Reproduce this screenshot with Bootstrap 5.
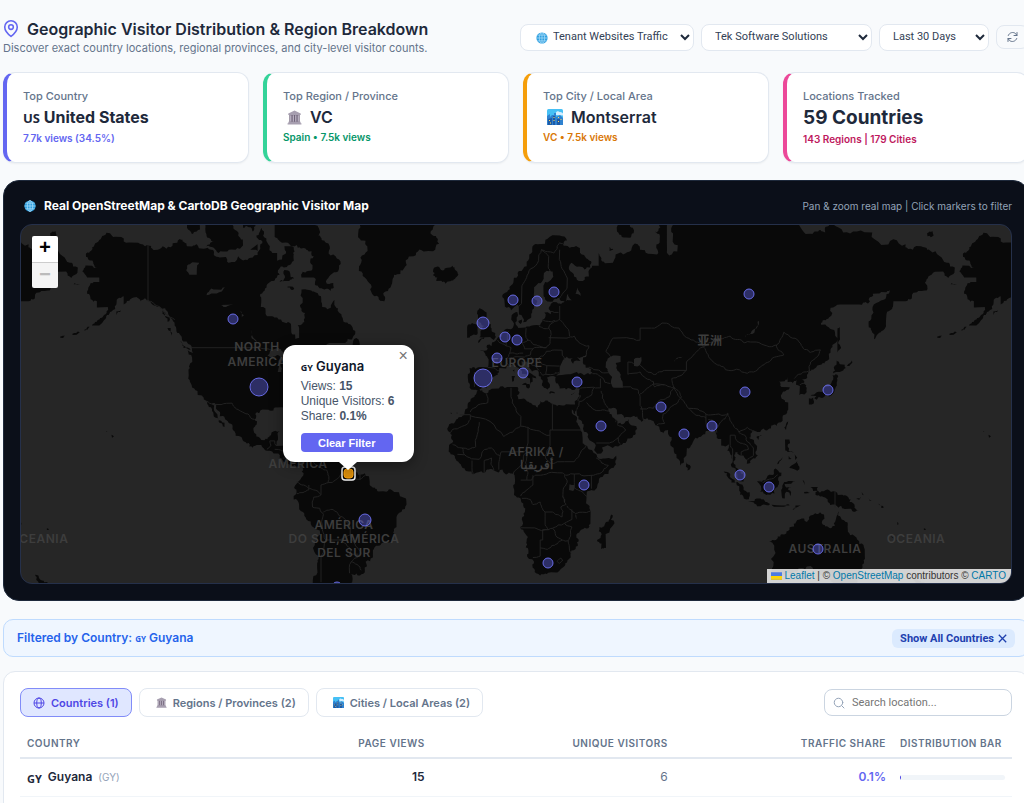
<!DOCTYPE html>
<html lang="en">
<head>
<meta charset="utf-8">
<meta name="viewport" content="width=device-width, initial-scale=1">
<title>Geographic Visitor Distribution</title>
<link href="https://cdn.jsdelivr.net/npm/bootstrap@5.3.0/dist/css/bootstrap.min.css" rel="stylesheet">
<style>
  body { background: #f8fafc; color: #1e293b; font-family: Inter, "Liberation Sans", sans-serif; font-size: 12px; line-height: 16px; overflow-x: hidden; }
  .dashboard { margin: 18px -5px 0 3px; }
  .page-title { font-size: 16px; line-height: 22px; font-weight: 600; }
  .page-sub { font-size: 11px; color: #64748b; }
  .filter-select { appearance: none; height: 27px; border: 1px solid #e2e8f0; border-radius: 8px; padding: 0 16px 0 13px; font: 11px/16px Roboto, sans-serif; color: #334155;
    background: #fff url("data:image/svg+xml,%3Csvg xmlns='http://www.w3.org/2000/svg' width='10' height='8' fill='none' stroke='%231e293b' stroke-width='2'%3E%3Cpath d='M1 2l4 4 4-4'/%3E%3C/svg%3E") no-repeat right 3px center; }
  .source-select { padding-left: 32px; width: 174px; }
  .tenant-select { width: 171px; }
  .range-select { width: 110px; }
  .source-icon { left: 16px; top: 8px; pointer-events: none; }
  .refresh-btn { height: 24px; width: 33px; border: 1px solid #e2e8f0; border-radius: 8px; background: #f8fafc; color: #64748b; padding: 0 9px; }
  .stat-grid { display: grid; grid-template-columns: repeat(4, minmax(0, 1fr)); gap: 14px; }
  .stat { background: #fff; border: 1px solid #e2e8f0; border-left: 4px solid var(--accent); border-radius: 12px; min-height: 91px; padding: 15px 16px 16px; box-shadow: 0 1px 2px #0000000d; }
  .stat-label { font-size: 11px; font-weight: 500; color: #64748b; }
  .stat-value { font-size: 16px; line-height: 26px; font-weight: 600; }
  .stat-name { font-weight: 700; }
  .stat-total { font-size: 19px; line-height: 28px; font-weight: 700; }
  .stat-note { font-size: 10px; line-height: 14px; font-weight: 600; color: var(--note); }
  .flag { font-family: "Noto Sans", sans-serif; font-weight: 700; }
  .flag-lg { font-size: 13px; }
  .map-card { background: #0b0f19; border: 1px solid #1e293b; border-radius: 16px; padding: 16px; color: #fff; }
  .map-head { height: 27px; padding-bottom: 9px; }
  .map-title { font-size: 12px; line-height: 18px; font-weight: 700; }
  .map-hint { font-size: 10px; color: #94a3b8; }
  .world { position: relative; height: 360px; border: 1px solid #25304a; border-radius: 12px; overflow: hidden; background: #262626; }
  .world svg.geo { width: 100%; height: 100%; display: block; }
  .land { fill: #090909; }
  .lake { fill: #262626; }
  .frontier { fill: none; stroke: #222; stroke-width: 1; }
  .geo text { font-family: Inter, "Noto Sans CJK SC", sans-serif; font-weight: 600; fill: #3d3d3d; font-size: 12px; text-anchor: middle; letter-spacing: .5px; }
  .pin { fill: #6366f1; fill-opacity: .4; stroke: #6f72f5; stroke-opacity: .9; stroke-width: 1; }
  .zoom-ctl { left: 11px; top: 11px; width: 26px; border-radius: 2px; overflow: hidden; }
  .zoom-ctl button { display: block; width: 26px; height: 26px; border: 0; padding: 0; background: #fff; color: #000; font: bold 20px/24px "Liberation Mono", monospace; }
  .zoom-ctl button + button { border-top: 1px solid #ccc; background: #f4f4f4; color: #bbb; }
  .popup { left: 33%; top: 120px; width: 131px; margin-left: -65px; padding: 12px 18px; height: 117px; background: #fff; border-radius: 12px; color: #475569; font: 12px/15px "Liberation Sans", sans-serif; box-shadow: 0 3px 14px #0006; }
  .popup::after { content: ""; position: absolute; left: 56px; top: 117px; border: 9px solid transparent; border-top: 8px solid #fff; border-bottom: 0; }
  .popup-name { font: 600 13px/18px Inter, sans-serif; color: #0f172a; margin-bottom: 2px; }
  .flag-sm { font-size: 9px; }
  .popup-close { right: 4px; top: 2px; border: 0; background: none; padding: 0; color: #757575; font: 16px/18px "Liberation Sans", sans-serif; width: 13px; }
  .clear-btn { display: block; width: 92px; height: 19px; margin-top: 9px; border: 0; border-radius: 4px; background: #6366f1; color: #fff; padding: 0; font: bold 11px/18px "Liberation Sans", sans-serif; }
  .credit { right: 0; bottom: 0; padding: 0 5px 0 4px; height: 14px; background: #ffffffcc; color: #333; font: 10px/14px "Liberation Sans", sans-serif; }
  .credit a { color: #0078a8; text-decoration: none; }
  .filter-bar { min-height: 38px; background: #eff6ff; border: 1px solid #bfdbfe; border-radius: 10px; padding: 0 13px; color: #2563eb; font-weight: 600; }
  .filter-bar .flag { font-size: 8px; }
  .show-all { height: 19px; border: 0; border-radius: 6px; background: #dbeafe; color: #1e40af; padding: 0 8px; font: bold 11px/19px Roboto, sans-serif; }
  .table-card { background: #fff; border: 1px solid #e2e8f0; border-radius: 12px; padding: 16px 16px 40px; }
  .tab-btn { height: 29px; border: 1px solid #e2e8f0; border-radius: 8px; background: #fff; color: #64748b; padding: 0 12px; font: 600 11px/16px Inter, sans-serif; gap: 6px; }
  .tab-btn.current { background: #e0e7ff; border-color: #818cf8; color: #4f46e5; }
  .search-box { width: 188px; height: 27px; border: 1px solid #cbd5e1; border-radius: 8px; padding: 0 10px 0 27px; font: 11px/16px Roboto, sans-serif; color: #334155; background: transparent; }
  .search-box::placeholder { color: #757575; }
  .search-icon { left: 9px; top: 8px; color: #94a3b8; }
  .geo-table { width: 100%; table-layout: fixed; margin-top: 11px; }
  .geo-table th { height: 30px; padding: 0 7px; border-bottom: 2px solid #e2e8f0; font-size: 10px; font-weight: 600; letter-spacing: .5px; color: #64748b; white-space: nowrap; }
  .geo-table td { height: 38px; padding: 0 7px; border-bottom: 1px solid #f1f5f9; }
  .geo-table .c1 { width: 23%; } .geo-table .c2 { width: 18.5%; } .geo-table .c3 { width: 24.5%; } .geo-table .c4 { width: 22%; } .geo-table .c5 { width: 12%; }
  .country-cell { gap: 6px; }
  .country-cell .flag { font-size: 11px; }
  .iso { font-size: 10px; color: #94a3b8; }
  .share { color: #6366f1; font-weight: 600; }
  .meter { height: 5px; border-radius: 3px; background: #f1f5f9; overflow: hidden; }
  .meter > div { height: 5px; background: #4f46e5; }
</style>
</head>
<body>
<svg width="0" height="0" class="position-absolute" aria-hidden="true">
  <symbol id="i-globe" viewBox="0 0 16 16"><circle cx="8" cy="8" r="7.5" fill="#2f9fe0"/><g fill="none" stroke="#b5e3fb" stroke-width=".9"><ellipse cx="8" cy="8" rx="3.6" ry="7.3"/><path d="M8 .5v15M.5 8h15M1.8 4.2h12.4M1.8 11.8h12.4"/></g></symbol>
  <symbol id="i-hall" viewBox="0 0 16 16"><path d="M8 .6l6.6 3.2v1.5H1.4V3.800z" fill="#a79fb0"/><path d="M2.500 5.300h11v7.500h-11z" fill="#6d6076"/><path d="M3 5.500h1.800v7H3zM6 5.500h1.500v7H6zM8.600 5.500h1.500v7H8.600zM11.300 5.500H13v7h-1.700z" fill="#b6aebf"/><path d="M1.500 12.500h13V14h-13zM.6 14h14.800v1.500H.6z" fill="#a79fb0"/></symbol>
  <symbol id="i-city" viewBox="0 0 16 16"><rect width="16" height="16" rx="1.500" fill="#46c0f5"/><path d="M9 3.500c1-2 3-1.500 3.500-.5 2-.3 3 .8 3.500 1.500v2L9 6z" fill="#d5efff"/><path d="M0 7l3-2v3l2-2h2V4h2v4l2-1 2-1 3 3v7H0z" fill="#2f82d0"/><path d="M1 10l4-1v7H1zM6 7h2v9H6zM10 10h3v6h-3z" fill="#1d5aa5"/><path d="M2 11h1v1H2zM6.500 8h1v1h-1zM6.500 11h1v1h-1zM11 8h1v1h-1zM13.500 10h1v1h-1zM11 12h1v1h-1zM3 13.500h1v1H3z" fill="#ffd75e"/></symbol>
</svg>

<main class="dashboard">
  <header class="d-flex justify-content-between align-items-center">
    <div>
      <h1 class="page-title d-flex align-items-center mb-0 gap-2">
        <svg width="16" height="18" viewBox="2 1 20 23" fill="none" stroke="#6366f1" stroke-width="2" stroke-linecap="round" stroke-linejoin="round"><path d="M20 10c0 6-8 12-8 12s-8-6-8-12a8 8 0 0 1 16 0Z"/><circle cx="12" cy="10" r="3"/></svg>
        Geographic Visitor Distribution &amp; Region Breakdown
      </h1>
      <div class="page-sub">Discover exact country locations, regional provinces, and city-level visitor counts.</div>
    </div>
    <div class="d-flex align-items-center flex-shrink-0" style="gap:7px">
      <div class="position-relative">
        <select class="filter-select source-select" aria-label="Traffic source"><option>Tenant Websites Traffic</option></select>
        <svg class="source-icon position-absolute" width="12" height="12"><use href="#i-globe"/></svg>
      </div>
      <select class="filter-select tenant-select" aria-label="Tenant"><option>Tek Software Solutions</option></select>
      <select class="filter-select range-select" aria-label="Date range"><option>Last 30 Days</option></select>
      <button class="refresh-btn d-flex align-items-center" aria-label="Refresh"><svg width="14" height="12" viewBox="0 0 24 24" fill="none" stroke="currentColor" stroke-width="2" stroke-linecap="round" stroke-linejoin="round"><path d="M21 3v6h-6M3 21v-6h6M3.500 9a9 9 0 0 1 15-3.400L21 9M3 15l2.500 3.400A9 9 0 0 0 20.500 15"/></svg></button>
    </div>
  </header>

  <section class="stat-grid mt-3">
    <div class="stat" style="--accent:#6366f1;--note:#6366f1">
      <div class="stat-label">Top Country</div>
      <div class="stat-value stat-name"><span class="flag flag-lg">US</span> United States</div>
      <div class="stat-note">7.7k views (34.5%)</div>
    </div>
    <div class="stat" style="--accent:#34d399;--note:#059669">
      <div class="stat-label">Top Region / Province</div>
      <div class="stat-value d-flex align-items-center gap-2"><svg class="ms-1" width="15" height="15"><use href="#i-hall"/></svg>VC</div>
      <div class="stat-note">Spain • 7.5k views</div>
    </div>
    <div class="stat" style="--accent:#f59e0b;--note:#d97706">
      <div class="stat-label">Top City / Local Area</div>
      <div class="stat-value d-flex align-items-center gap-2"><svg class="ms-1" width="16" height="16"><use href="#i-city"/></svg>Montserrat</div>
      <div class="stat-note">VC • 7.5k views</div>
    </div>
    <div class="stat" style="--accent:#ec4899;--note:#be185d">
      <div class="stat-label">Locations Tracked</div>
      <div class="stat-value stat-total">59 Countries</div>
      <div class="stat-note">143 Regions | 179 Cities</div>
    </div>
  </section>

  <section class="map-card" style="margin-top:17px">
    <div class="map-head d-flex justify-content-between align-items-center">
      <h2 class="map-title d-flex align-items-center mb-0 gap-2"><svg class="ms-1" width="12" height="12"><use href="#i-globe"/></svg>Real OpenStreetMap &amp; CartoDB Geographic Visitor Map</h2>
      <div class="map-hint">Pan &amp; zoom real map | Click markers to filter</div>
    </div>
    <div class="world">
      <svg class="geo" viewBox="0 0 990 358" preserveAspectRatio="xMidYMid slice" role="img" aria-label="World map of visitors">
        <g id="atlas"></g>
        <g>
          <text x="236" y="126">NORTH</text><text x="236" y="141">AMERICA</text>
          <text x="277" y="243">AMÉRICA</text>
          <text x="323" y="304">AMÉRICA</text><text x="323" y="318">DO SUL;AMÉRICA</text><text x="323" y="332">DEL SUR</text>
          <text x="496" y="142">EUROPE</text><text x="515" y="231">AFRIKA /</text><text x="515" y="244">أفريقيا</text>
          <text x="689" y="120">亚洲</text><text x="804" y="328">AUSTRALIA</text>
          <text x="895" y="318">OCEANIA</text><text x="18" y="318">OCEANIA</text>
        </g>
        <g id="pins"></g>
        <rect x="321" y="242" width="13" height="13" rx="3" fill="#090909" stroke="#eee" stroke-width="1.500"/>
        <rect x="323" y="244" width="9" height="9" rx="3" fill="#d48a0c" stroke="#f59e0b"/>
      </svg>
      <div class="zoom-ctl position-absolute"><button aria-label="Zoom in">+</button><button aria-label="Zoom out">−</button></div>
      <div class="popup position-absolute">
        <button class="popup-close position-absolute" aria-label="Close">×</button>
        <div class="popup-name"><span class="flag flag-sm">GY</span> Guyana</div>
        <div>Views: <b>15</b></div>
        <div class="text-nowrap">Unique Visitors: <b>6</b></div>
        <div>Share: <b>0.1%</b></div>
        <button class="clear-btn">Clear Filter</button>
      </div>
      <div class="credit position-absolute"><svg width="11" height="8" viewBox="0 0 12 8"><path fill="#4c7be1" d="M0 0h12v4H0z"/><path fill="#ffd500" d="M0 4h12v3H0z"/><path fill="#e0bc00" d="M0 7h12v1H0z"/></svg> <a href="#">Leaflet</a> | © <a href="#">OpenStreetMap</a> contributors © <a href="#">CARTO</a></div>
    </div>
  </section>

  <section class="filter-bar d-flex justify-content-between align-items-center" style="margin-top:18px">
    <div>Filtered by Country: <span class="flag">GY</span> Guyana</div>
    <button class="show-all d-flex align-items-center gap-1">Show All Countries <svg width="9" height="9" viewBox="0 0 9 9" stroke="currentColor" stroke-width="1.300"><path d="M.8.8l7.400 7.400M8.200.8L.8 8.200"/></svg></button>
  </section>

  <section class="table-card" style="margin-top:14px">
    <div class="d-flex justify-content-between align-items-center">
      <div class="d-flex" style="gap:7px">
        <button class="tab-btn current d-flex align-items-center"><svg width="12" height="12" viewBox="0 0 24 24" fill="none" stroke="currentColor" stroke-width="2"><circle cx="12" cy="12" r="10"/><ellipse cx="12" cy="12" rx="4.500" ry="10"/><path d="M2 12h20"/></svg>Countries (1)</button>
        <button class="tab-btn d-flex align-items-center"><svg class="ms-1" width="11" height="11"><use href="#i-hall"/></svg>Regions / Provinces (2)</button>
        <button class="tab-btn d-flex align-items-center"><svg class="ms-1" width="11" height="11"><use href="#i-city"/></svg>Cities / Local Areas (2)</button>
      </div>
      <div class="position-relative">
        <svg class="search-icon position-absolute" width="12" height="12" viewBox="0 0 24 24" fill="none" stroke="currentColor" stroke-width="2" stroke-linecap="round"><circle cx="11" cy="11" r="8.500"/><path d="M22 22l-4.500-4.500"/></svg>
        <input class="search-box" type="text" placeholder="Search location..." aria-label="Search location">
      </div>
    </div>
    <table class="geo-table">
      <thead><tr><th class="c1">COUNTRY</th><th class="c2 text-end">PAGE VIEWS</th><th class="c3 text-end">UNIQUE VISITORS</th><th class="c4 text-end">TRAFFIC SHARE</th><th class="c5">DISTRIBUTION BAR</th></tr></thead>
      <tbody><tr>
        <td><div class="d-flex align-items-center country-cell"><span class="flag pt-1">GY</span><span class="fw-semibold">Guyana</span><span class="iso">(GY)</span></div></td>
        <td class="text-end fw-semibold">15</td><td class="text-end" style="color:#64748b">6</td><td class="text-end share">0.1%</td>
        <td><div class="meter"><div style="width:1%"></div></div></td>
      </tr></tbody>
    </table>
  </section>
</main>

<script>
  // Coastlines as "lon,lat" pairs, one ring per entry.
  const land = [
  "-168,65.6 -164,66.5 -162,66.2 -163.5,67.1 -166.5,68.4 -163,69.7 -161,70.4 -156.6,71.3 -152,70.8 -145,70 -141,69.6 -137,69 -135,69.5 -129,70 -128,70.5 -125,69.5 -121,69.8 -115,69 -114,68.2 -109,67.9 -108,67 -104,68 -98,67.8 -96,68.2 -95,69.5 -96.5,71 -94.5,72 -92,70 -91,69.5 -90,68.5 -88,68.5 -88,67.3 -86,67.5 -85,69.5 -82,69.5 -81.5,68.5 -82,67 -84,66.3 -86.5,66.4 -87,65 -89,64 -93,62.5 -94.5,60 -94.7,58.8 -92.8,58.5 -92.5,57 -88,56.5 -85,55.3 -82.3,55 -82.2,53 -80.5,51.3 -79,51.5 -79,54 -79.5,54.7 -77,56 -76.5,57.5 -78.5,58.8 -77.5,60 -78,62.3 -75,62.2 -73,61.9 -70,61 -69.6,59.5 -69.5,58.8 -67.5,58.3 -65.5,59.5 -64.5,60.3 -63,58.5 -61.5,56.7 -60,55.3 -57.5,54.6 -56,52.5 -57,51.5 -60,50.2 -66.5,50.2 -69,48.7 -65,49.2 -64.5,48 -65,47 -64,46 -61,45.5 -63.5,44.6 -66,43.6 -67,44.8 -70,43.8 -70.7,42.5 -70,41.7 -74,40.7 -75,38.5 -76,37 -75.6,35.3 -78,33.9 -81,32 -81.4,30.5 -80.1,26.5 -80.6,25.2 -81.8,26.2 -82.7,28 -84,30 -86,30.4 -89,30.3 -89.5,29.2 -91.5,29.5 -94,29.6 -97,28 -97.3,26 -97.8,22.5 -96.5,19.5 -94.5,18.2 -92,18.6 -90.5,20 -90.3,21 -87,21.5 -87.7,19.5 -88.2,17.5 -88.5,15.8 -86,15.9 -83.3,15 -83.5,12 -83.7,11 -82.3,9.2 -79.5,9.5 -77.3,8.6 -77.6,7.3 -78.5,8.5 -80,7.5 -81.7,7.8 -83.5,8.6 -85.7,10 -87.5,12.8 -91,13.9 -94.5,16.2 -97,15.9 -101,17.4 -105,19.8 -105.5,21.5 -108,24.8 -109.5,26.5 -112,29 -113,31.2 -114.7,31.8 -114,30 -112.5,27.8 -111,25.5 -109.6,23.2 -110.3,23.4 -112,25 -114,27 -114.2,28.5 -116,30.5 -117.2,32.7 -118.5,34 -120.6,34.6 -122,36.8 -123.8,39 -124.3,41 -124,44 -124.7,48.3 -122.5,47.5 -123,49 -127,51 -128,52.5 -130,54.5 -131,56 -134,58.5 -137,58.8 -140,59.8 -144,60 -148,60.5 -151,59.3 -151,61 -154,59.3 -156,57.8 -159,55.9 -164,54.6 -162,55.5 -158,57.5 -157.5,58.8 -162,58.7 -162,60 -166,61.5 -165,63 -161,63.7 -161,64.5 -166,64.5",
  "-117,69.5 -112,68.5 -105,69 -102,69.6 -104,71 -107,72.9 -112,73 -118,72.5 -117,71 -112,70.4", "-125,72 -123,71.2 -121,71.5 -118.5,73 -125,74", "-102,72 -98,71.5 -97,73 -102,73", "-99,69 -96,68.8 -96,69.8",
  "-89,73.5 -89,71 -86,70 -80,69.7 -76,69 -73,68 -73.5,66 -77.5,65.5 -78,64.5 -73,64.5 -71,62.8 -66,62 -65,63.5 -68,63.8 -66,65 -61.9,66.8 -64,68 -68,70 -71,71 -77,73 -82,73.7",
  "-87,63.7 -85,65.8 -81,64.3 -83,63.9", "-84,62.8 -81,62.5 -82,62.2", "-59,47.7 -55.5,51.5 -53,47 -56,47", "-128,50.7 -123.5,48.4 -125,48.8", "-133,54 -131.7,54 -131.2,52.2", "-135,58 -132,56 -133,55.5", "-154,57.8 -152,58 -154,57",
  "-171,63.5 -169,63.3 -171.5,63.3", "-167,53.7 -165,54.3 -167,53.3", "-172,52.6 -169,53 -172,52.3", "-177,51.9 -175,52.1 -177,51.6", "-156,20.2 -155,19.5 -155.8,19", "-158.2,21.6 -157.7,21.3 -158,21.3",
  "-85,22 -80,23 -74.5,20.2 -77.5,19.8 -82,22.5", "-74,19.8 -69,19 -71,17.8 -74,18.3", "-78,18.4 -76.3,18 -78,17.9", "-61.9,10.7 -60.9,10.8 -61.1,10.1",
  "-60,78 -55,73 -54,70.5 -51,69.5 -53.5,67 -52,64.5 -49,61.5 -44,60 -42.5,62 -40,65 -36,66 -32,68 -26,68.8 -22,70.5 -24,72 -22,73.5 -20,76",
  "-24,65.5 -22,66.4 -20,65.7 -16,66.5 -13.6,65 -15,64.3 -18.8,63.4 -22.7,63.9 -21.5,64.5 -24,64.9 -22,65.3",
  "-77.3,8.6 -75.5,10.6 -72,12 -71.5,11 -71,9.5 -70,12 -68,10.6 -64,10.3 -62,10.7 -60.5,8.5 -57,6 -52,4.8 -50,1.5 -50,0 -48,-1 -44.5,-2.6 -40,-2.9 -37,-4.8 -35,-6 -34.9,-8 -37,-11 -39,-13 -39,-17 -40.8,-21.5 -42,-23 -46.5,-24.2 -48.7,-26 -48.7,-28.5 -52,-33 -54,-34.8 -57,-34.4 -58.4,-34 -57,-36 -57.6,-38 -62,-39 -65,-41 -67,-46 -73,-48 -74,-42 -73.4,-38 -71.6,-32 -71,-28 -70.3,-20 -70.5,-18.3 -76,-14 -79,-8 -81.2,-6 -81.2,-4.5 -80,-3 -81,-1 -80,0.5 -78.8,1.8 -77.2,4 -77.5,7",
  "-6,35.8 -2,35.1 3,36.8 10,37.3 11,36.8 10.5,34.5 11,33.2 15.2,32.3 19,30.3 20,32.5 23,32.7 25,31.6 29,31 32.3,31.3 32.5,30 33.5,27.8 35.5,24 37.2,21 37.4,18.9 39.3,15.8 43,12.5 43.3,11.5 45,10.6 51.2,11.9 50.8,9.3 48,4.5 44,1 41,-2 39,-5 39.5,-8 40.7,-11 40.6,-15 37,-18 34.8,-20 35.5,-24 32.8,-26 32.5,-28.5 30,-31.5 27,-33.8 22,-34.1 20,-34.8 18.3,-34 17.5,-30 15.2,-27 14.4,-22.5 11.8,-17 13.7,-11 13,-8.5 12,-5.5 9,-1 9.7,2 9.5,4 8.5,4.7 6,4.3 4.5,6.3 1,5.9 -3,5 -7.6,4.4 -11,6.7 -13.3,9 -15,11 -16.8,12.5 -17.5,14.7 -16.2,17 -17,21 -14.5,26 -11,28.8 -9.8,30 -9.5,32 -7,33.9",
  "49.3,-12 50.5,-15.5 47,-25 45,-25.5 43.3,-22 44.3,-17 47,-15", "-16.8,28.4 -16.2,28.3 -16.6,28", "-14.2,28.6 -13.9,28.2 -14.3,28.1",
  "-9,37 -9.5,38.7 -8.8,42 -9,43.2 -4,43.5 -1.5,43.4 -1.2,45.8 -2.5,47.3 -4.7,48.2 -1.5,48.7 -1.8,49.7 0,49.4 1.6,50.8 4,51.8 5,53.3 8,53.7 8.7,54 8.1,56 8.3,57 10.6,57.7 10.3,56.5 10,54.8 11,54 14,54.1 18.5,54.7 20,54.6 21,56 21.7,57.6 24.3,57.2 23.6,58.8 28,59.5 30,59.9 28,60.6 23,59.9 21.4,61 21.3,63 25.2,65 24,65.8 21.5,65.3 21,64 17.5,62 17.3,60.6 18.8,59.8 16.7,58 16.3,56.5 14.3,55.5 13,55.4 11.2,59 10.5,59.3 8,58.1 5.5,58.9 5,61.5 9,63.6 13,66 15.5,68.3 19,69.8 23.5,70.7 28,71 31,70.3 29.5,69.6 33,69.4 38,68.2 41,67 40.5,66.2 36,66.4 32.8,67 34.8,64.5 37.5,63.9 40,64.7 39.8,65.6 44,66.5 44,68.5 46.5,66.9 53,68.6 54,68.3 60,69.8 61,69 68,68.3 69,70 67,71.5 69,72.9 72,72.9 72,70 73,67.8 74,68.3 74.5,71 75,72.8 80,72.7 81,73.8 95,76 113,74 120,73 127,73.4 129,71.2 133,71.5 137,71.4 140,72.5 150,71.5 160,69.7 170,69.8 171,69.1 178,69.3 180,68.9 187,67 190.2,66.2 187.5,64.4 182,65.5 179.3,64.7 179,62.4 174,61.7 170,60 165,60 163.5,58 162,56.2 161.9,55 160,53.2 157,51.2 155.7,54 156,57 161,60.3 163.5,62.5 160,61.8 156.5,61.5 154.5,59.5 151,59.3 143,59.3 138.5,56.5 135.3,54.8 141,53 140.5,50 138.5,46.8 135.5,44.3 132.5,43 130.5,42.3 129.5,40.8 127.5,39.7 129.4,37 129,35.2 126.4,34.5 126.6,37.5 125,38 125.2,39.6 121.6,38.9 121.5,40.7 118,39 119,37.3 122.4,37.2 119.2,35 121.8,32 121.8,29.5 119.5,25.5 117,23.5 113.5,22.2 110.3,21.2 108,21.6 105.7,19 109,15 109.3,12 106.8,10.4 104.8,8.7 105,10.2 102.5,12 101,13.4 100,13.2 99.3,9.5 101,6.8 103.3,4.5 103.5,1.4 101,3 100.3,5.8 98.3,8 98.6,12 97.5,16.5 94.3,16 94.3,18.5 92,21.5 90.5,22.5 88,21.6 86.5,20 82.3,16.5 80.2,15 80,12 79,9.3 77.5,8 76,11 73.5,16 72.8,20 72.5,22 70.5,20.8 69,22.3 68,23.7 66.5,25.4 61.5,25.1 57.2,26.8 54.5,26.6 51.5,27.8 50,30.2 48,30 48.5,28 50.2,26.5 50.8,24.8 51.3,26 51.6,24.4 54,24.2 56.3,26.2 56.8,24.2 59.8,22.4 57.8,19 55,17 52,15.6 45,12.8 43.4,12.7 42.8,16 39.2,21 37.2,24.5 35,28 34.9,29.5 34.3,27.9 32.6,29.9 32.3,31.3 34.3,31.3 35.2,33 36,35.8 36,36.8 34,36.3 30.6,36.5 28,36.8 26.5,38.5 26.2,40 29,41.1 31.5,41.3 35,42 38,41 41.5,41.5 41,43 37.5,44.7 39.3,47.2 35,46.3 36.5,45.3 33.5,44.5 32.6,45.5 33.5,46.1 31,46.6 29,45 28,43 28,41.6 26.5,40.4 24,40.7 22.8,40.3 24,38 23,36.5 21.5,37 21,38.8 19.4,40.8 19.4,42 15.5,44 13.7,45 12.3,45.3 12.5,44 14,42.5 16,41.6 18.4,40.1 16.8,40.4 16.9,39 15.8,38 15.8,40 12.5,41.5 10.3,43.5 8.8,44.4 6,43.1 3.2,43.2 3,41.9 0,39.9 0.1,38.7 -2,36.8 -5.5,36",
  "-5.5,50.2 1,51 1.6,52.7 0,53.5 -2,55.8 -2,57.6 -5,58.5 -5.5,56 -3,54.5 -4.5,53.2 -4.5,52 -5,51.7 -3,51.3", "-10,51.6 -6.3,52.3 -5.7,54.6 -8,55.2 -10,54.2", "12.5,38 15.5,38.2 15,36.8", "8.3,40.8 9.7,40.8 9.2,39.2 8.5,39", "8.7,42.5 9.4,42.8 9.2,41.5", "23.7,35.4 26.2,35.2 24,35", "32.5,35 34.3,35.5 33,34.7", "11,55.7 12.5,56 12,55",
  "51.5,71.5 55,73 58,72 57,70.7 53.5,70.8", "48.5,69.4 50,69 48.5,68.8",
  "130.3,33.5 132,33.7 131.5,31.3 130.3,31.3", "131,34.4 135.7,35.6 137,37.3 139.5,38.5 140,41 141.3,41.3 142,39.5 140.8,36 140,35 137,34.6 135.7,33.6 133,34.3", "140.2,41.6 140.5,43.3 141.7,45.4 145,44.2 145.4,43.2 143,42", "142,46 143.5,49 143,52 143,54.3 142,53.3 142,50", "146,44 148,45.4 146,43.8", "132.5,33.5 134.5,34.2 133.5,33",
  "178.8,71.3 181,71.6 181.5,71 179,70.9", "138,75 143,73.5 142,73.3", "120.2,23 121.8,25.2 120.9,22", "108.7,19.3 111,20 109.5,18.2", "80,9.7 81.8,7.5 80.5,6 79.8,7.5",
  "95.3,5.5 98,4.5 103.5,-1 106,-3 105.7,-5.8 102,-4 98.5,1", "105.3,-6.8 108,-6.6 112.5,-6.9 114.4,-7.8 113,-8.3 108,-7.7", "109,1.5 111,1.5 113,3 116.5,6.8 119,5 117.7,3 118,1 116.2,-3.5 114.5,-4 110.2,-2.8", "119.8,0.5 121,1.2 124.9,1.5 123,0.5 120.3,0.4 121,-1 123.3,-0.8 121.8,-2 122.8,-4.5 121,-2.8 120.4,-5.5 119.4,-5.4 119,-3",
  "115,-8.1 117,-8.3 119,-8.4 122.5,-8.3 120,-8.9 116,-8.9", "123.6,-10.2 127,-8.4 124.5,-9.2", "120.5,18.4 122.3,18.4 121.5,15.8 124,13 122.7,13.6 120.6,14", "122,11.8 123.2,10.6 122,10.5", "124.5,12.5 125.5,11.2 124.7,10.2", "122.2,7 124,8.5 125.5,9.7 126.4,7.5 125.5,5.8 124,6.5", "117.3,8.5 119.4,11.3 119.2,10.5", "127.7,2 128.5,1 128,-.7", "128.3,-2.9 130.7,-3.3 128.5,-3.5",
  "131,-0.8 134,-.8 134.8,-3.2 138,-1.8 144,-4 147.5,-6 147,-7 150.8,-10.5 147,-9.7 143.5,-8.5 142.5,-9.3 139,-8.2 138,-6 133,-4 134,-2.3 132,-2.5", "148.5,-5.8 152,-4.5 151,-6.2", "154.8,-5.5 156,-6.6 155.2,-6.5", "160,-8.5 161,-9.3 160,-9.4", "152,-3 152.7,-4 152.5,-4.2", "166.5,-15 167,-16 166.7,-16.2", "164,-20.3 167,-22.3 166,-22", "177.5,-17.5 178.5,-18 177.5,-18.2", "159,-7.7 159.7,-8.4 159,-8",
  "113.7,-22.5 114.3,-22.6 117.5,-20.7 121,-19.5 122.3,-17.2 125,-15 126.5,-14 129.5,-15 130.8,-12.5 133,-11.5 136.5,-12 135.6,-15 139.3,-17.5 141,-16.5 141.7,-12.6 142.6,-10.8 143.7,-14 145.4,-15 146.3,-18.8 149,-20.5 151,-23.5 153.2,-25.5 153.3,-29 151.5,-33 150,-37.4 146,-39 141,-38.2 138,-35.6 137.7,-33 136,-34.8 134,-32.7 131,-31.5 126,-32.3 123.8,-34 118,-35 115,-34.3 115.7,-31.6",
  "172.7,-34.5 174.5,-36 178.5,-37.7 177,-39.5 175,-41.5 174,-39.3 174.7,-37.5"
  ];
  const lakes = ["47,45 49,46.5 53,46.7 53,45 51,44.7 52.5,42 53.8,39 54,37 50.5,37 49,38.5 49.5,40.5 48,42","58.5,45.8 61.5,46.5 61,44.2 58.5,43.8","104,51.6 108,53 109.8,55.7 109.2,55.5 106.5,52.8","30.5,60 33,60.2 31.5,61.5","34.5,61.5 36.5,61 35.5,62.7","32,0.3 34,0 33.5,-2.5 31.8,-2","-125,66.5 -120,67 -121,65 -124,65","-117,61.2 -109.5,62.8 -113,62.3 -115,62.5","-111,59.2 -106,59.3 -110,58.8","-103,58 -101.5,57 -102.5,56.5","-99,53.8 -96.3,50.5 -98,51.8","-92,46.7 -88.5,48.8 -85,47.5 -85,46.5 -88,47","-87.8,42 -86.3,42 -85,45.8 -87.5,45.3","-84,46 -80,45 -82.5,43.2 -83.5,45","-83,41.5 -79,42.8 -80,42.5","75,45 79,46.6 77,46.4","29,-3.5 31,-8.5 29.8,-7","34,-10 35,-14 34.4,-12"];
  const frontiers = ["-141,69.6 -141,60 -137,59 -130,56","-123,49 -95,49 -90,48 -88,48.3","-117,32.5 -111,31.3 -106.5,31.8 -103,29 -100,28 -97.3,26","-92.2,14.5 -90.5,16 -91,17.8 -89,17.8 -88.5,16","-89,14.5 -86,13.8 -83.3,15","-85.7,11 -83.7,11",
  "-72,12 -73,9 -70,7 -67.5,6 -67,1 -70,0 -70,-4 -73,-2 -77,0 -80,1.300","-70,-4 -73,-5 -73.5,-9 -70.5,-9.5 -69,-12 -69.5,-17.5 -68,-22 -70,-28 -70,-37","-67,1 -64,2 -61,5 -60,8","-61,5 -59.8,1.800 -56.500,2 -54,2.300 -51.600,4.200","-57,6 -58,3 -56.500,2","-54,5.500 -54,2.300","-69,-11 -65,-10 -60,-14 -58,-17 -58,-20 -54.600,-25.500 -53.600,-27 -57.600,-30 -58.300,-34","-68,-22 -62.500,-22 -58,-20","-62.500,-22 -57.600,-25.500 -58.500,-27.300 -54.600,-27.300","-57.600,-30 -53.500,-33","-80,-3.500 -75,-2 -75,0",
  "-13,27.700 -8.700,27.700 -8.700,26 -13,23 -17,21","-8.700,27.300 5,19.500 12,23.500 10,30 8,34 8,37","-5,25 -6.500,15.500 -12,15 -16,16.500","-2,35 -1.500,32 -8.700,28.700","12,23.500 15,23 24,20 24,22 25,22 25,31.500","25,22 37,22","24,20 24,16 22,12 24,9 30,9.500 34,9.500 37,14 39,16","15,23 15,17 13.500,13.500 4,13.500 3.500,11.700","15,13 14,9 15,5 14.500,2 16.500,2 18,4 27,5 31,4 34,4.500 42,4 45,5 48,8 43,11","34,4.500 34,1 34,-1 37.500,-3 39.300,-4.700","41,4 41,-1.500","30,4 31,2 29.700,-1 29.300,-4 30.500,-8 28.500,-9 29,-13 25,-11 22,-11 22,-13 22,-16 23.500,-18 12,-17.300","12.500,-5.500 16,-6 17,-8 20,-7 22,-11","31,-8.500 34.500,-11.600 40.500,-10.700","33,-10 33,-14 30,-15.500 25,-17.500 23.500,-18 21,-18 21,-22 20,-22 20,-28 17,-28.500","25,-17.500 29,-22 31.500,-22.300 32.500,-20 33,-17 30,-15.500","20,-25 23,-25.500 27,-23.500 29,-22","31.500,-22.300 32,-26 32.800,-26.900","27,-30 28.500,-28.700 29.300,-29.500 28,-30.600 27,-30","9,4.500 11,7 14,13","3,6.300 3,9 3.500,11.700 0,15 -4,13 -5,10.500 -11,12.300 -12,15","1,6 0,11 -3,10 -3,5","-8,10 -8,7 -7.500,4.500","-14,12.500 -11,12.300","12,2 14.500,2","17,4 17,0 12,-4.500",
  "-1.500,43.400 3,42.400","-7,42 -7,37.300","2.500,51 6,49.500 8,49 7.500,47.500 6,46 7.500,43.800","7,53.300 6,50 6,49.500","14.200,54 15,51 12.500,50.300 13.500,48.700 17,48.700 22.500,49 24,50.700 23.500,54 19.500,54.400","15,51 18.500,49.700 22.500,49","13,47.500 10,47.300 7.500,47.500","7,46 10.500,46.500 13.500,46.400 16,47 17,48.700","16,46.400 19,45.900 22.500,48 29,48.300 30,45.500","19,45.900 20.500,44.500 22.700,43.900 28,43.800","22.700,43.900 22.300,41.300 26.300,41.700","20,42 21,41 22.300,41.300","16,44.500 18.500,43.500 19.500,42.500","23.500,54 26,55.600 28,56 28,59","21,56 26,55.800","24,57.800 27.500,57.600","23.500,51.600 31,51.500 34,52 36,50.300 40,49.500 39,47.200","28,56 31,54 32,52","28,69 29,66 31,62.500 28,60.600","24,65.800 23.500,68 20.500,69 16,66 12.500,63 12.300,59.500 11.300,59","20.500,69 25.500,68.500 28,70 30,69.600",
  "26,41.700 28,42","41.500,41.500 44,41 46.500,38.800 48.800,38.400","40,43.500 44,42.600 48.500,41.800","36,36.500 42,37.200 44.700,37 44.700,40","45,36 45.500,33.500 48,30","42,37 41,34.500 36,32.500 35,29.500","39,32 44.700,29.200 48,29","35.500,32.500 36.500,34.500","43,17 47,17 52,19 55,22 51.500,24","52,19 53,16.500","54,37.300 60,36.500 61,34 61,31 62,28.500 63,25.300","61,35 65,37.500 71,38 75,37 73,34 69.500,33 66.500,30 61,29.800","71,38 67,37.300 66.500,39 61,42 56,41.300 56,45","56,45 62,43.500 67,41.200 71,42.500 80,42.500","49,46.500 47,48 50,51.500 61,51 61,54 70,55.200 77,54 83,51 87,49.200","87,49.200 80,45 80,42.500 74,40 75,37 79,32.500 81,30 88,28 92,27.800 97,28.300 98.500,25 101.500,21.300 105,23 108,21.600","87,49.200 92,50.700 98,52 104,50.300 113,49.500 117,49.700 120,53 127,50 131,47.700 135,48.400 131,45 130.500,42.300","87,49.200 91,45 96,42.700 105,41.600 111,44 117,46.500 120,47 117,49.700","75,37 78,34 74.500,31 70.500,28 71,24.500 68,24","81,30 84,27.500 88,26.500 88,28","88,26.500 89.500,22","89,26 92,25 92.500,21","92,22 94,25 97,28","98,20 100,20 101,17.500 105,16 105.500,14.500 102.500,13.500 102.500,12","101.500,21 104,20 106,17 107.500,15 107.500,12 105,10.500","98,20 98,16 99,13 98.800,10","124.300,40 128,42 130.500,42.500","126.500,38 128.500,38.500","141,-2.600 141,-9.100","109.600,2 111.500,1 115,2.500 117.500,4.200"];

  const project = (lon, lat) => [470.5 + 2.436 * lon, 260 - 139.6 * Math.log(Math.tan(Math.PI / 4 + lat * Math.PI / 360))];
  let seed = 7;
  const rnd = () => (seed = (seed * 16807) % 2147483647) / 2147483647 - .5;
  // Midpoint displacement gives straight segments a natural, ragged edge.
  function roughen(pts, closed, amount) {
    const out = [];
    pts.forEach((p, i) => {
      out.push(p);
      const q = pts[i + 1] || (closed && pts[0]);
      if (!q) return;
      const dx = q[0] - p[0], dy = q[1] - p[1], k = rnd() * amount;
      if (Math.hypot(dx, dy) > 2.5 && Math.abs(dy) > .5 && Math.abs(dx) > .5) out.push([(p[0] + q[0]) / 2 - dy * k, (p[1] + q[1]) / 2 + dx * k]);
    });
    return out;
  }
  function trace(src, closed, amount) {
    let pts = src.split(' ').map(s => project(...s.split(',').map(Number)));
    for (let i = 0; i < 3; i++) pts = roughen(pts, closed, amount);
    return 'M' + pts.map(p => p[0].toFixed(1) + ' ' + p[1].toFixed(1)).join('L') + (closed ? 'Z' : '');
  }
  const layer = (list, cls, closed, amount) => `<path class="${cls}" d="${list.map(s => trace(s, closed, amount)).join('')}"/>`;
  const sheet = layer(land, 'land', true, .6) + layer(frontiers, 'frontier', false, .3) + layer(lakes, 'lake', true, .4);
  document.getElementById('atlas').innerHTML = [-877, 0, 877].map(dx => `<g transform="translate(${dx})">${sheet}</g>`).join('');

  const pins = [[212,94],[238,162,9],[492,75],[516,76],[533,67],[462,98,6],[484,112],[496,115],[476,133],[462,153,9],[502,148],[556,157],[580,201],[640,182],[728,69],[724,167],[807,165],[663,209],[691,201],[719,250],[748,262],[563,260],[527,338],[344,295,6],[797,324],[316,362]];
  document.getElementById('pins').innerHTML = pins.map(([x, y, r = 5]) => `<circle class="pin" cx="${x}" cy="${y}" r="${r}"/>`).join('');
</script>
<script src="https://cdn.jsdelivr.net/npm/bootstrap@5.3.0/dist/js/bootstrap.bundle.min.js"></script>
</body>
</html>
